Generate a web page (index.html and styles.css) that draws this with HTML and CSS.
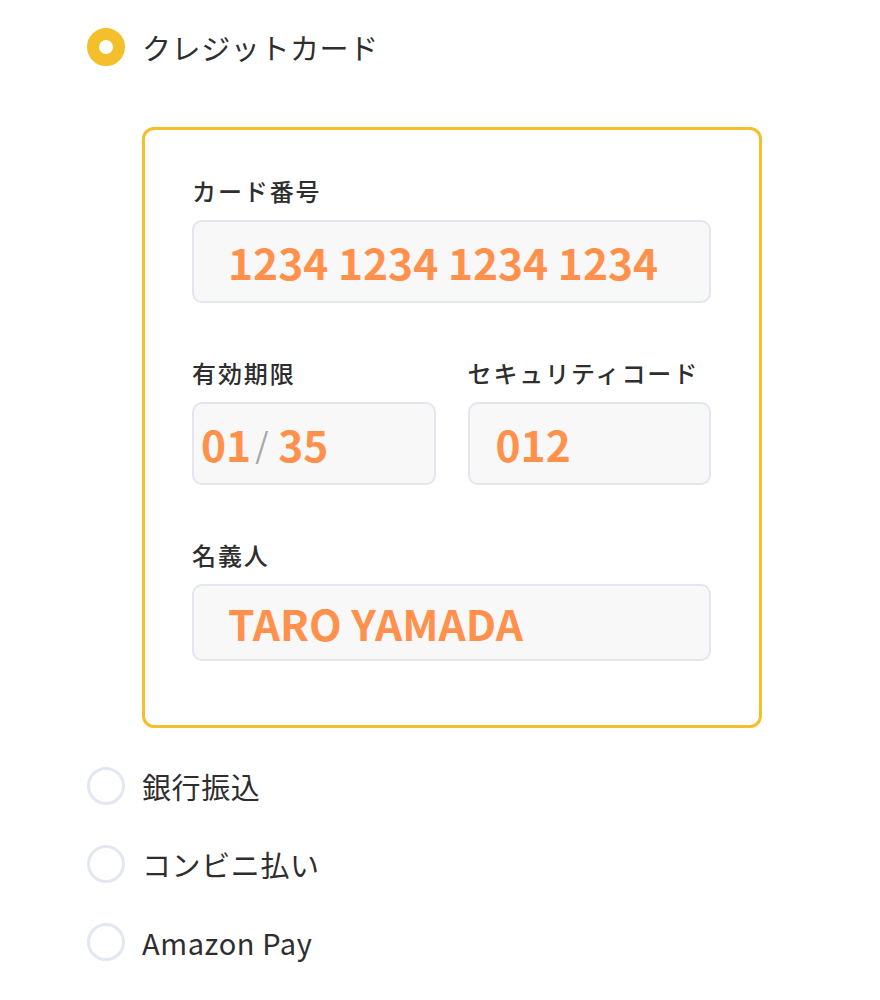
FILE: index.html
```html
<!DOCTYPE html>
<html lang="ja">
<head>
<meta charset="utf-8">
<title>お支払い方法</title>
<link rel="stylesheet" href="styles.css">
</head>
<body>
<div class="methods">
  <div class="method">
    <div class="option">
      <span class="radio radio--on"></span>
      <span class="option-label">クレジットカード</span>
    </div>
    <div class="card">
      <div class="field">
        <div class="field-label">カード番号</div>
        <div class="input input--wide">1234 1234 1234 1234</div>
      </div>
      <div class="field-row">
        <div class="field">
          <div class="field-label">有効期限</div>
          <div class="input input--exp">01<span class="slash">/</span> 35</div>
        </div>
        <div class="field">
          <div class="field-label">セキュリティコード</div>
          <div class="input input--cvc">012</div>
        </div>
      </div>
      <div class="field">
        <div class="field-label">名義人</div>
        <div class="input input--wide input--name">TARO YAMADA</div>
      </div>
    </div>
  </div>
  <div class="option">
    <span class="radio"></span>
    <span class="option-label">銀行振込</span>
  </div>
  <div class="option">
    <span class="radio"></span>
    <span class="option-label">コンビニ払い</span>
  </div>
  <div class="option">
    <span class="radio"></span>
    <span class="option-label">Amazon Pay</span>
  </div>
</div>
</body>
</html>
```
FILE: styles.css
```css
html, body {
  margin: 0;
  padding: 0;
  background: #ffffff;
}

body {
  font-family: "Noto Sans CJK JP", "Noto Sans", sans-serif;
  color: #333333;
  overflow: hidden;
}

.methods {
  display: flex;
  flex-direction: column;
  gap: 38px;
  padding: 27px 0 0 87px;
}

.option {
  display: flex;
  align-items: center;
  gap: 17px;
  height: 40px;
}

.radio {
  box-sizing: border-box;
  width: 38px;
  height: 38px;
  border-radius: 50%;
  border: 3px solid #e2e7f1;
  background: #ffffff;
  flex: none;
}

.radio--on {
  border: 12px solid #f3bf2b;
}

.option-label {
  font-size: 29px;
  letter-spacing: 0.6px;
  line-height: 40px;
  color: #2e2e2e;
}

.card {
  box-sizing: border-box;
  width: 620px;
  margin: 60px 0 0 55px;
  border: 3px solid #f3bf2b;
  border-radius: 12px;
  padding: 43px 48px 64px 47px;
  display: flex;
  flex-direction: column;
  gap: 52px;
}

.field {
  display: flex;
  flex-direction: column;
  gap: 12px;
  min-width: 0;
}

.field-row {
  display: grid;
  grid-template-columns: 1fr 1fr;
  gap: 32px;
}

.field-label {
  font-size: 24px;
  font-weight: 500;
  letter-spacing: 1.9px;
  line-height: 35px;
  color: #2e2e2e;
}

.input {
  box-sizing: border-box;
  height: 83px;
  border: 2px solid #e3e6ee;
  border-radius: 10px;
  background: #f8f8f9;
  display: flex;
  align-items: center;
  font-size: 42.5px;
  font-weight: 700;
  color: #ff914d;
  white-space: pre;
}

.input--wide {
  padding-left: 34px;
}

.input--name {
  height: 77px;
}

.input--exp {
  padding-left: 7px;
}

.input--cvc {
  padding-left: 26px;
}

.slash {
  font-weight: 400;
  font-size: 34px;
  color: #a8a8a8;
  margin-left: 4px;
}
```
